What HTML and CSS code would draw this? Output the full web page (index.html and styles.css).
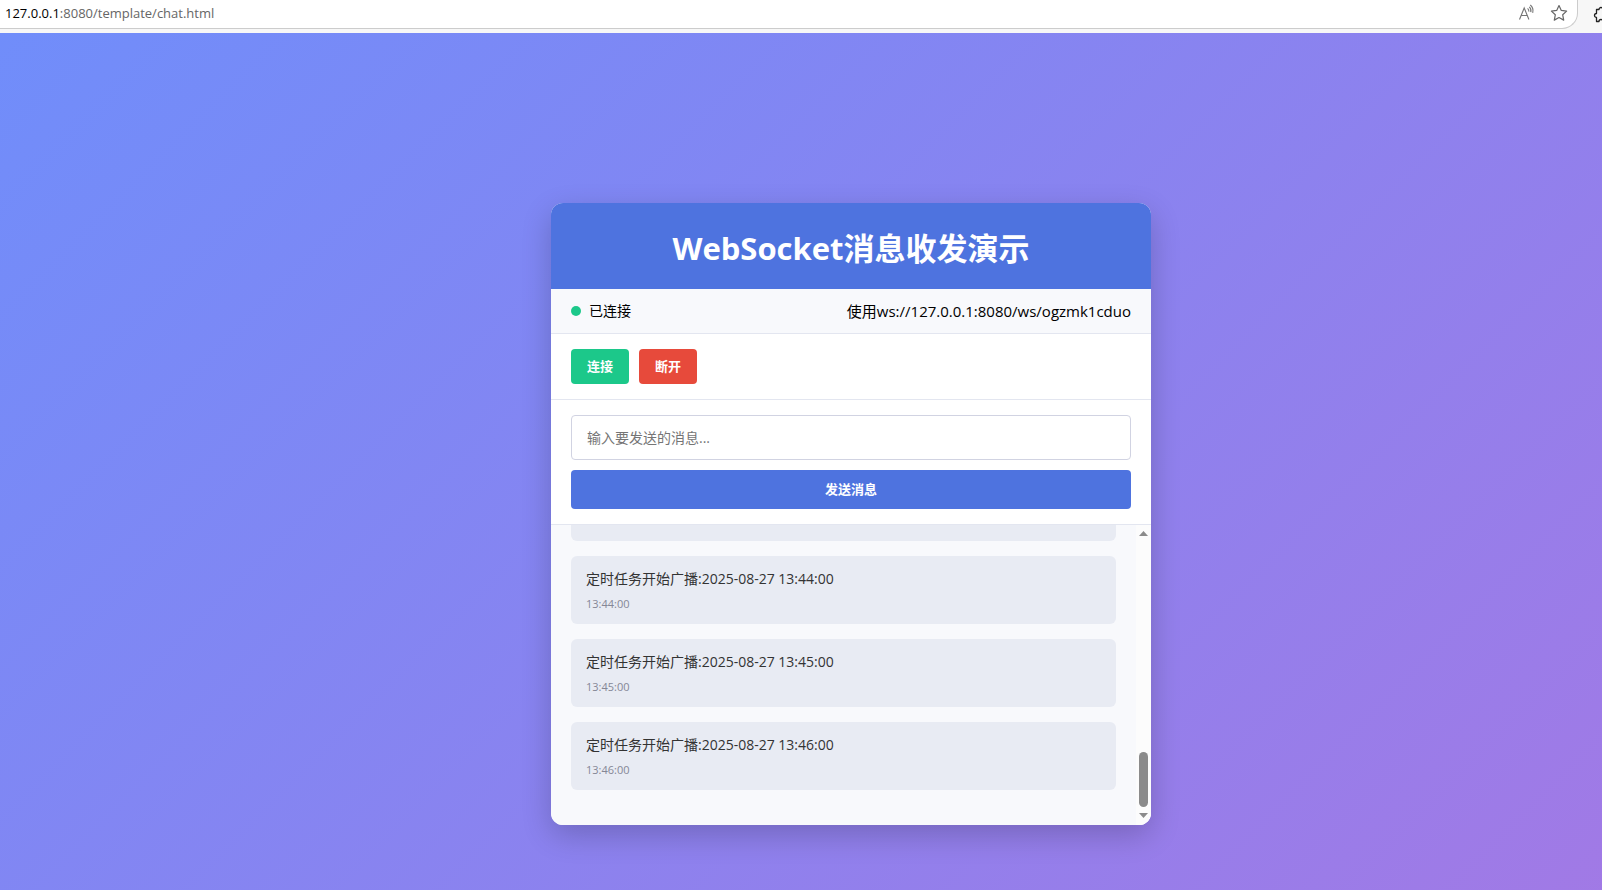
FILE: index.html
```html
<!DOCTYPE html>
<html lang="zh-CN">
<head>
    <meta charset="UTF-8">
    <meta name="viewport" content="width=device-width, initial-scale=1.0">
    <title>WebSocket消息收发演示</title>
    <link rel="stylesheet" href="styles.css">
</head>
<body>
    <div class="browser-bar">
        <div class="address">
            <span class="url"><span class="host">127.0.0.1</span>:8080/template/chat.html</span>
            <button type="button" class="bar-button" aria-label="Read aloud">
                <svg width="18" height="18" viewBox="0 0 18 18" fill="none" stroke="#757575" stroke-width="1.1">
                    <path d="M1.5 15.5 6.2 4 10.9 15.5M3.2 11.5H9.3"/>
                    <path d="M9.6 4.4c1 .8 1.4 1.9 1.2 3.2M11.3 2.8c1.5 1.3 2 3.1 1.5 5.4M12.3 1c2.4 1.9 3.2 4.6 2.4 7.8"/>
                </svg>
            </button>
            <button type="button" class="bar-button" aria-label="Favorite">
                <svg width="18" height="18" viewBox="0 0 18 18" fill="none" stroke="#666" stroke-width="1.2" stroke-linejoin="round">
                    <path d="M9 1.5 11.3 6.4 16.6 7.1 12.7 10.8 13.7 16.1 9 13.5 4.3 16.1 5.3 10.8 1.4 7.1 6.7 6.4Z"/>
                </svg>
            </button>
        </div>
        <button type="button" class="extensions" aria-label="Extensions">
            <svg width="18" height="18" viewBox="0 0 18 18" fill="none" stroke="#222" stroke-width="1.3" stroke-linejoin="round">
                <path d="M3.5 3.5H6a2 2 0 0 1 4 0h4v4a2 2 0 0 1 0 4v4H10a2 2 0 0 0-4 0H3.5V11.5a2 2 0 0 1 0-4Z"/>
            </svg>
        </button>
    </div>

    <main class="page">
        <div class="container">
            <header class="header">
                <h1>WebSocket消息收发演示</h1>
            </header>
            <div class="status-bar">
                <div class="status"><span class="status-dot"></span>已连接</div>
                <div>使用ws://127.0.0.1:8080/ws/ogzmk1cduo</div>
            </div>
            <div class="controls">
                <button type="button" class="btn btn-connect">连接</button>
                <button type="button" class="btn btn-disconnect">断开</button>
            </div>
            <form class="message-form">
                <input type="text" id="messageInput" aria-label="消息" placeholder="输入要发送的消息...">
                <button type="button" class="btn btn-send">发送消息</button>
            </form>
            <div class="messages">
                <div class="message-list">
                    <div class="message"></div>
                    <div class="message">
                        <div class="text">定时任务开始广播:2025-08-27 13:44:00</div>
                        <div class="time">13:44:00</div>
                    </div>
                    <div class="message">
                        <div class="text">定时任务开始广播:2025-08-27 13:45:00</div>
                        <div class="time">13:45:00</div>
                    </div>
                    <div class="message">
                        <div class="text">定时任务开始广播:2025-08-27 13:46:00</div>
                        <div class="time">13:46:00</div>
                    </div>
                </div>
                <div class="scrollbar">
                    <svg width="9" height="5" viewBox="0 0 9 5"><path fill="#8b8b8b" d="M4.5 0 9 5H0Z"/></svg>
                    <div class="thumb"></div>
                    <svg width="9" height="5" viewBox="0 0 9 5"><path fill="#8b8b8b" d="M0 0H9L4.5 5Z"/></svg>
                </div>
            </div>
        </div>
    </main>
</body>
</html>
```

FILE: styles.css
```css
* {
    box-sizing: border-box;
    margin: 0;
    padding: 0;
}

body {
    display: flex;
    flex-direction: column;
    min-height: 100vh;
    font-family: 'Open Sans', 'Noto Sans CJK SC', sans-serif;
    font-size: 15px;
    color: #000;
}

button, input {
    font-family: inherit;
}

/* address bar */
.browser-bar {
    display: flex;
    flex: none;
    height: 33px;
    padding-bottom: 4px;
    background: #f7f7f7;
    overflow: hidden;
}

.address {
    display: flex;
    flex: 1;
    align-items: center;
    padding: 0 9px 2px 5px;
    background: #fff;
    border: 1px solid #ccc;
    border-width: 0 1px 1px 0;
    border-radius: 0 0 16px 0;
    font-size: 13px;
    color: #666;
}

.url {
    flex: 1;
}

.host {
    color: #000;
}

.bar-button, .extensions {
    display: flex;
    border: none;
    background: none;
}

.bar-button {
    margin-left: 14px;
}

.extensions {
    flex: none;
    align-items: center;
    width: 24px;
    padding-left: 15px;
}

.extensions svg {
    flex: none;
}

.page {
    display: flex;
    flex: 1;
    justify-content: center;
    align-items: flex-start;
    padding: 170px 0 60px 100px;
    background: linear-gradient(135deg, #6e8efb, #a777e3) -109px 0 / calc(100% + 318px) calc(100% + 105px) no-repeat;
}

.container {
    width: 100%;
    max-width: 600px;
    background: #fff;
    border-radius: 12px;
    box-shadow: 0 10px 30px rgba(0, 0, 0, 0.2);
    overflow: hidden;
}

.header {
    padding: 22px 20px 18px;
    background: #4e73df;
    color: #fff;
    text-align: center;
}

h1 {
    font-size: 31px;
    line-height: 46px;
}

.status-bar {
    display: flex;
    justify-content: space-between;
    align-items: center;
    padding: 12px 20px;
    background: #f8f9fc;
    border-bottom: 1px solid #e3e6f0;
    line-height: 20px;
}

.status {
    display: flex;
    align-items: center;
    gap: 8px;
    font-size: 14px;
}

.status-dot {
    width: 10px;
    height: 10px;
    border-radius: 50%;
    background: #1cc88a;
}

.controls {
    display: flex;
    gap: 10px;
    padding: 15px 20px;
    border-bottom: 1px solid #e3e6f0;
}

.btn {
    padding: 8px 16px;
    border: none;
    border-radius: 4px;
    color: #fff;
    font-size: 13px;
    font-weight: bold;
    line-height: 19px;
    cursor: pointer;
}

.btn-connect {
    background: #1cc88a;
}

.btn-disconnect {
    background: #e74a3b;
}

.message-form {
    display: flex;
    flex-direction: column;
    gap: 10px;
    padding: 15px 20px;
    border-bottom: 1px solid #e3e6f0;
}

.message-form input {
    height: 45px;
    padding: 0 15px;
    border: 1px solid #d1d3e2;
    border-radius: 4px;
    font-size: 14px;
}

.message-form input::placeholder {
    color: #757575;
}

.btn-send {
    padding: 10px 16px;
    background: #4e73df;
}

.messages {
    display: flex;
    height: 300px;
    background: #f8f9fc;
}

.message-list {
    display: flex;
    flex: 1;
    flex-direction: column;
    justify-content: flex-end;
    gap: 15px;
    padding: 0 20px 35px;
    overflow: hidden;
}

.message {
    flex: none;
    padding: 13px 15px 11px;
    border-radius: 6px;
    background: #e8ebf3;
}

.text {
    margin-bottom: 5px;
    font-size: 14px;
    line-height: 20px;
    color: #333;
}

.time {
    font-size: 11px;
    line-height: 19px;
    color: #858796;
}

.scrollbar {
    display: flex;
    flex-direction: column;
    align-items: center;
    width: 15px;
    padding: 6px 0 7px;
    background: #fcfcfc;
}

.thumb {
    width: 9px;
    height: 55px;
    margin: auto 0 6px;
    border-radius: 5px;
    background: #8b8b8b;
}
```
